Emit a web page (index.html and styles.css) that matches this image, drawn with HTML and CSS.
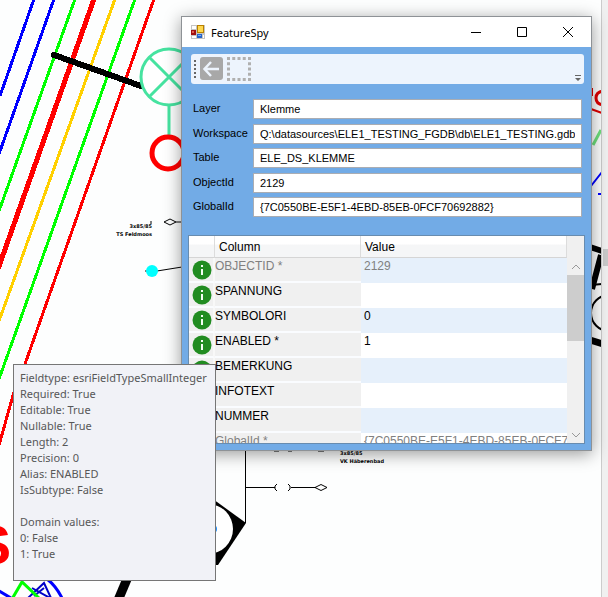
FILE: index.html
```html
<!DOCTYPE html>
<html lang="en">
<head>
<meta charset="utf-8">
<title>FeatureSpy</title>
<link rel="stylesheet" href="styles.css">
</head>
<body>
<main class="desktop">
  <svg class="map" viewBox="0 0 608 597" preserveAspectRatio="xMinYMin slice" aria-label="Network map">
    <g fill="none" stroke-width="3" shape-rendering="crispEdges">
      <path stroke="#00f" d="M34-1L0 96M54-1L-1 154"/>
      <path stroke="#0f0" d="M75-1L-1 211M135-1L-1 379"/>
      <path stroke="#f00" stroke-width="5" d="M94-1L-2 269"/>
      <path stroke="#ffd000" d="M115-1L-1 321"/>
      <path stroke="#f00" d="M154-1L25 364M14 392L-1 445"/>
      <path stroke="#000" stroke-width="6" stroke-linecap="round" d="M54 55L141 86"/>
    </g>
    <g fill="none" stroke="#46e3a0" stroke-width="3">
      <circle cx="169" cy="77" r="28" fill="#fff"/>
      <path d="M149 57L189 97M189 57L149 97M169 106V136"/>
    </g>
    <circle cx="168" cy="153" r="16" fill="#fff" stroke="#f00" stroke-width="5"/>
    <g fill="none" stroke="#000">
      <path d="M157 271L182 267M145 271H148"/>
      <path d="M164 222L170 219L176 222L170 225ZM176 222H182M151 221V224"/>
      <path d="M245.500 450V523M245 487.500H275M291 487.500H316M315 487.500L321 484.500L327 487.500L321 490.500Z"/>
      <path d="M277 484L275 486V489L277 491M288 484L290 486V489L288 491M274 451H279M288 451H292M318 451H324"/>
    </g>
    <circle cx="152" cy="271" r="6" fill="#0ff"/>
    <g class="map-label">
      <text x="152" y="228" text-anchor="end">3x85/85</text>
      <text x="152" y="236" text-anchor="end">TS Feldmoos</text>
      <text x="340" y="455">3x85/85</text>
      <text x="340" y="463">VK Häberenbad</text>
    </g>
    <path d="M206 494L246 523L218 565H206Z"/>
    <circle cx="208" cy="529" r="25" fill="#fff"/>
    <circle cx="213" cy="529" r="4" fill="#1e90ff"/>
    <path d="M122 579H132L124 598H114Z"/>
    <text class="map-letter" x="11" y="564" text-anchor="end">S</text>
    <g fill="none" stroke-width="2">
      <path stroke="#00f" stroke-width="3" d="M-1 591L11 598M47 579Q56 586 62 598"/>
      <path stroke="#0000c8" d="M32 588L50 598M28 598L44 583L51 598M34 596L44 588"/>
      <path stroke="#0f0" stroke-width="3" d="M12 599L22 582L39 598"/>
    </g>
    <g fill="none" stroke-width="3">
      <path stroke="#e00000" stroke-width="2" d="M592 88V96M591 109L602 113"/>
      <path stroke="#e00000" d="M603 91Q596 92 596 98T603 105"/>
      <path stroke="#6fe07c" d="M593 145L601 130"/>
      <path stroke="#00f" stroke-width="2" d="M591 186L602 172M598 194H602"/>
      <path stroke="#000" stroke-width="6" d="M590 247L602 251M592 289L601 255"/>
      <path stroke="#000" stroke-width="2" d="M591 285L602 284"/>
      <circle cx="609" cy="313" r="18" stroke="#000" stroke-width="2"/>
      <path stroke="#000" stroke-width="7" d="M590 340L603 344"/>
    </g>
  </svg>
  <div class="map-scroll"><div class="map-thumb"></div></div>

  <section class="window" aria-label="FeatureSpy">
    <header class="titlebar">
      <svg class="app-icon" viewBox="0 0 14 14" aria-hidden="true">
        <path fill="#c4c4c4" d="M0 0H14V14H0Z"/>
        <path fill="#fff" d="M1 1H5V4H1ZM1 11H5V13H1ZM12 10H13V13H12Z"/>
        <path fill="#a01010" d="M0 5H5V10H0Z"/><path fill="#e06050" d="M1 6H3V8H1Z"/>
        <path fill="#b98100" d="M6 0H13V8H6Z"/><path fill="#ffd84f" d="M7 1H12V7H7Z"/>
        <path fill="#2563c9" d="M6 9H11V13H6Z"/><path fill="#78adf5" d="M7 10H10V11H7Z"/>
      </svg>
      <h1 class="title">FeatureSpy</h1>
      <button class="caption" type="button" aria-label="Minimize"><svg viewBox="0 0 12 12"><path d="M1 6.500H11"/></svg></button>
      <button class="caption" type="button" aria-label="Maximize"><svg viewBox="0 0 12 12"><path d="M1.500 1.500H10.500V10.500H1.500Z"/></svg></button>
      <button class="caption" type="button" aria-label="Close"><svg viewBox="0 0 12 12"><path d="M1 1L11 11M11 1L1 11"/></svg></button>
    </header>

    <div class="toolbar">
      <svg class="grip" viewBox="0 0 2 20" aria-hidden="true"><path d="M1 1V20"/></svg>
      <button class="tool" type="button" aria-label="Back">
        <svg viewBox="0 0 24 24"><rect x="0" y="0" width="23" height="23" rx="3" fill="#a8a8a8"/><path d="M19 12H5M11 5L4.500 12L11 19" fill="none" stroke="#edf4fd" stroke-width="2.500"/></svg>
      </button>
      <button class="tool" type="button" aria-label="Select">
        <svg viewBox="0 0 24 24"><path d="M0 1.500H24M0 22.500H24M1.500 0V24M22.500 0V24" fill="none" stroke="#b0b0b0" stroke-width="3" stroke-dasharray="3 2.250"/></svg>
      </button>
      <svg class="overflow" viewBox="0 0 6 6" aria-hidden="true"><path d="M0 0H6V1H0ZM0 3H6L3 6Z"/></svg>
    </div>

    <form class="fields">
      <label for="layer">Layer</label><input id="layer" value="Klemme" readonly>
      <label for="workspace">Workspace</label><input id="workspace" value="Q:\datasources\ELE1_TESTING_FGDB\db\ELE1_TESTING.gdb" readonly>
      <label for="table">Table</label><input id="table" value="ELE_DS_KLEMME" readonly>
      <label for="objectid">ObjectId</label><input id="objectid" value="2129" readonly>
      <label for="globalid">GlobalId</label><input id="globalid" value="{7C0550BE-E5F1-4EBD-85EB-0FCF70692882}" readonly>
    </form>

    <div class="grid">
      <svg width="0" height="0" class="defs" aria-hidden="true">
        <symbol id="info" viewBox="0 0 20 20"><circle cx="10" cy="10" r="9.500" fill="#218c21"/><path fill="#f4fff4" d="M9 5H11V7H9ZM9 9H11V15H9Z"/></symbol>
      </svg>
      <div class="rows">
        <table>
          <thead><tr><th class="mark"></th><th class="name">Column</th><th>Value</th></tr></thead>
          <tbody>
            <tr class="muted"><td><svg><use href="#info"/></svg></td><td>OBJECTID *</td><td>2129</td></tr>
            <tr><td><svg><use href="#info"/></svg></td><td>SPANNUNG</td><td></td></tr>
            <tr><td><svg><use href="#info"/></svg></td><td>SYMBOLORI</td><td>0</td></tr>
            <tr><td><svg><use href="#info"/></svg></td><td>ENABLED *</td><td>1</td></tr>
            <tr><td><svg><use href="#info"/></svg></td><td>BEMERKUNG</td><td></td></tr>
            <tr><td><svg><use href="#info"/></svg></td><td>INFOTEXT</td><td></td></tr>
            <tr><td><svg><use href="#info"/></svg></td><td>NUMMER</td><td></td></tr>
            <tr class="muted"><td><svg><use href="#info"/></svg></td><td>GlobalId *</td><td>{7C0550BE-E5F1-4EBD-85EB-0FCF70692882}</td></tr>
          </tbody>
        </table>
      </div>
      <div class="scrollbar">
        <svg viewBox="0 0 8 6"><path d="M0 5L4 1L8 5"/></svg>
        <div class="thumb"></div>
        <svg class="down" viewBox="0 0 8 6"><path d="M0 1L4 5L8 1"/></svg>
      </div>
    </div>
  </section>

  <div class="tooltip" role="tooltip">Fieldtype: esriFieldTypeSmallInteger
Required: True
Editable: True
Nullable: True
Length: 2
Precision: 0
Alias: ENABLED
IsSubtype: False

Domain values:
0: False
1: True
</div>
</main>
</body>
</html>
```

FILE: styles.css
```css
* { box-sizing: border-box; }

body {
  margin: 0;
  font-family: "Liberation Sans", Arial, sans-serif;
  font-size: 12px;
  color: #000;
}

.desktop {
  position: relative;
  display: flex;
  height: 100vh;
  overflow: hidden;
  background: #fdfefe;
}

.map {
  position: absolute;
  inset: 0;
  width: 100%;
  height: 100%;
}

.map-label { font: bold 5px "DejaVu Sans", sans-serif; }
.map-letter { font: bold 56px "Liberation Sans", sans-serif; fill: #f00; }

.map-scroll {
  position: relative;
  width: 7px;
  margin-left: auto;
  padding-top: 249px;
  border-left: 1px solid #ccc;
  background: #f0f0f0;
}

.map-thumb {
  height: 17px;
  margin-left: 1px;
  background: #c9c9c9;
}

.window {
  position: absolute;
  left: 181px;
  top: 16px;
  width: 411px;
  height: 435px;
  display: flex;
  flex-direction: column;
  border: 1px solid #8e9296;
  background: #72abe6;
  box-shadow: 0 3px 16px rgba(0, 0, 0, 0.4);
}

.titlebar {
  display: flex;
  align-items: center;
  height: 30px;
  padding-left: 9px;
  background: #fff;
}

.app-icon { width: 14px; height: 14px; }

.title {
  flex: 1;
  margin: 0 0 0 6px;
  font: 11px "Noto Sans", "Open Sans", sans-serif;
}

.caption {
  display: flex;
  align-items: center;
  justify-content: center;
  width: 46px;
  height: 30px;
  padding: 0;
  border: 0;
  background: none;
}

.caption svg {
  width: 12px;
  height: 12px;
  fill: none;
  stroke: #000;
}

.toolbar {
  display: flex;
  align-items: center;
  height: 30px;
  margin: 7px 7px 0 9px;
  padding: 0 3px;
  border-radius: 3px;
  background: #edf4fd;
}

.grip {
  width: 2px;
  height: 20px;
  margin-right: 4px;
  stroke: #666;
  stroke-width: 2;
  stroke-dasharray: 2 2;
}

.tool {
  width: 24px;
  height: 24px;
  margin-right: 3px;
  padding: 0;
  border: 0;
  background: none;
}

.tool svg { display: block; width: 24px; height: 24px; }

.overflow {
  align-self: flex-end;
  width: 6px;
  height: 6px;
  margin: 0 0 3px auto;
  fill: #666;
}

.fields {
  display: grid;
  grid-template-columns: 60px 1fr;
  grid-auto-rows: 20px;
  align-content: space-between;
  height: 118px;
  margin: 15px 9px 0 11px;
  font-size: 11px;
}

.fields label { line-height: 19px; }

.fields input {
  min-width: 0;
  height: 20px;
  padding: 0 6px;
  border: 1px solid #aaadb3;
  border-radius: 0;
  background: #fff;
  color: #000;
  font: inherit;
}

.grid {
  position: relative;
  display: flex;
  flex: 1;
  min-height: 0;
  margin: 18px 6px 6px;
  border: 1px solid #688caf;
  background: #fff;
}

.defs { position: absolute; }

.rows {
  flex: 1;
  min-width: 0;
  overflow: hidden;
}

table {
  width: 100%;
  table-layout: fixed;
  border-collapse: separate;
  border-spacing: 0;
}

th {
  height: 22px;
  padding: 0 4px;
  border-right: 1px solid #dcdcdc;
  border-bottom: 1px solid #d5d5d5;
  background: linear-gradient(#fff 40%, #f5f6f7 41%);
  font-weight: normal;
  text-align: left;
}

.mark { width: 26px; }
.name { width: 146px; }

td {
  height: 25px;
  padding: 1px 3px;
  line-height: 14px;
  vertical-align: top;
  white-space: nowrap;
  overflow: hidden;
}

td:nth-child(-n+2) {
  padding-left: 0;
  background: #f0f0f0;
  border-bottom: 2px solid #fafcff;
}

td:first-child {
  padding: 2px 0 0 3px;
  border-right: 2px solid #f8f8f8;
}

td svg { display: block; width: 20px; height: 20px; }

tbody tr:nth-child(odd) td:last-child { background: #e6f0fb; }

.muted { color: #808080; }

.scrollbar {
  display: flex;
  flex-direction: column;
  align-items: center;
  width: 17px;
  padding: 28px 0 5px;
  background: #f0f0f0;
}

.scrollbar svg {
  flex: none;
  width: 8px;
  height: 6px;
  fill: none;
  stroke: #999;
}

.thumb {
  width: 100%;
  height: 66px;
  margin-top: 5px;
  background: #cdcdcd;
}

.scrollbar .down { margin-top: auto; }

.tooltip {
  position: absolute;
  left: 13px;
  top: 364px;
  min-width: 203px;
  min-height: 217px;
  padding: 5px 5px 3px 6px;
  border: 1px solid #767676;
  background: #f1f2f7;
  color: #575757;
  font: 11px/16px "Noto Sans", "Open Sans", sans-serif;
  white-space: pre;
}
```
